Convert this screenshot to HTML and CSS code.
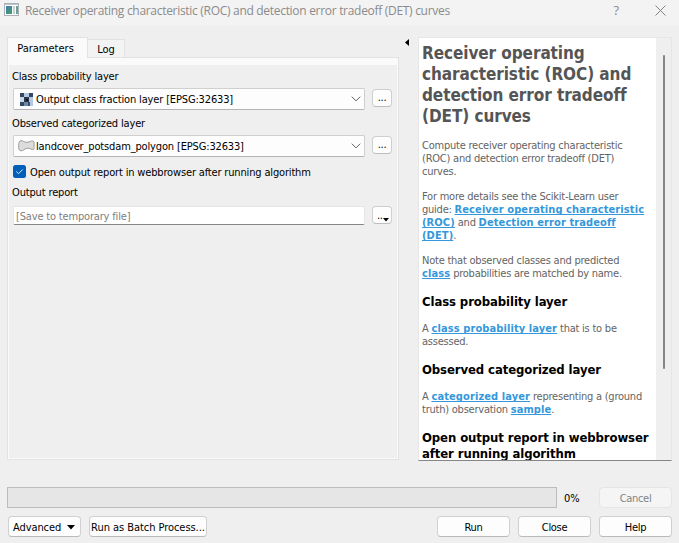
FILE: index.html
```html
<!DOCTYPE html>
<html lang="en">
<head>
<meta charset="utf-8">
<title>Receiver operating characteristic (ROC) and detection error tradeoff (DET) curves</title>
<link rel="stylesheet" href="styles.css">
</head>
<body>
<div class="dialog">
  <header class="titlebar">
    <svg class="app-icon" width="15" height="13" viewBox="0 0 15 13">
      <defs><linearGradient id="g" x1="0" y1="0" x2="1" y2="1"><stop offset="0" stop-color="#4779b5"/><stop offset="1" stop-color="#3fa55d"/></linearGradient></defs>
      <rect x=".5" y=".5" width="14" height="12" fill="#fff" stroke="#a9b2b7"/>
      <path d="M1 1.5h13" stroke="#bcc5c9"/>
      <rect x="2" y="3" width="6" height="8" fill="url(#g)"/>
      <rect x="9" y="3" width="2" height="8" fill="#c3d3cf"/>
      <rect x="12" y="3" width="2" height="8" fill="#6f9f92"/>
    </svg>
    <span class="caption">Receiver operating characteristic (ROC) and detection error tradeoff (DET) curves</span>
    <span class="context-help">?</span>
    <svg class="close" width="11" height="11" viewBox="0 0 11 11"><path d="M.5 .5l10 10M10.500 .5l-10 10" stroke="#828282" fill="none"/></svg>
  </header>

  <main class="content">
    <section class="params">
      <nav class="tabs">
        <span class="tab active">Parameters</span>
        <span class="tab">Log</span>
      </nav>
      <div class="pane">
        <div class="form">
          <label class="label">Class probability layer</label>
          <div class="row">
            <div class="combo">
              <svg class="layer-icon" width="13" height="13" viewBox="0 0 13 13">
                <rect width="13" height="13" fill="#b1c9e5"/>
                <path d="M0 0h4v4H0zM9 0h4v4H9zM0 9h4v4H0z" fill="#37475f"/>
                <path d="M4 4h5v5H4z" fill="#2a3648"/>
                <path d="M0 4h4v5H0z" fill="#c6d8ee"/>
                <path d="M4 9h4v4H4z" fill="#6d87a8"/>
                <path d="M8 9h2v4H8z" fill="#3d4f69"/>
                <rect x="6" y="6" width="2" height="2" fill="#0d141f"/>
              </svg>
              <span class="value one">Output class fraction layer [EPSG:32633]</span>
              <svg class="chevron" width="10" height="6" viewBox="0 0 10 6"><path d="M.8 .7L5 4.900L9.200 .7" fill="none" stroke="#606060"/></svg>
            </div>
            <button class="more">...</button>
          </div>
          <label class="label second">Observed categorized layer</label>
          <div class="row">
            <div class="combo polygon">
              <svg class="layer-icon" width="17" height="13" viewBox="0 0 17 13"><path d="M3 .6C5 .4 6 2.600 9 2.300C12 2 13 .6 15 1C16.300 1.300 16.200 3 16 5C15.800 7 16.600 9 15.500 9.500C14 10 12 8 9.500 8.200C6.500 8.500 5 11.200 3 10.800C.5 10.300 .5 8 .7 5.500C.8 3 1 .8 3 .6Z" fill="#dcdcdc" stroke="#9c9c9c"/></svg>
              <span class="value two">landcover_potsdam_polygon [EPSG:32633]</span>
              <svg class="chevron" width="10" height="6" viewBox="0 0 10 6"><path d="M.8 .7L5 4.900L9.200 .7" fill="none" stroke="#606060"/></svg>
            </div>
            <button class="more">...</button>
          </div>
          <div class="check-row">
            <svg width="13" height="13" viewBox="0 0 13 13"><rect width="13" height="13" rx="2.500" fill="#005fb8"/><path d="M3.300 6.500l2.200 2.200L9.800 4.400" fill="none" stroke="#d5e8fa"/></svg>
            <span class="check-text">Open output report in webbrowser after running algorithm</span>
          </div>
          <label class="label third">Output report</label>
          <div class="row output">
            <div class="field">[Save to temporary file]</div>
            <button class="more menu">..<svg width="6" height="4" viewBox="0 0 6 4"><path d="M0 0h6L3 3.500z"/></svg></button>
          </div>
        </div>
      </div>
    </section>

    <div class="splitter"><svg width="4" height="7" viewBox="0 0 4 7"><path d="M4 0v7L0 3.500z"/></svg></div>

    <aside class="help">
      <article class="help-text">
        <h1>Receiver operating<br>characteristic (ROC) and<br>detection error tradeoff<br>(DET) curves</h1>
        <p>Compute receiver operating characteristic<br>(ROC) and detection error tradeoff (DET)<br>curves.</p>
        <p>For more details see the Scikit-Learn user<br>guide: <a>Receiver operating characteristic</a><br><a>(ROC)</a> and <a>Detection error tradeoff</a><br><a>(DET)</a>.</p>
        <p>Note that observed classes and predicted<br><a>class</a> probabilities are matched by name.</p>
        <h2>Class probability layer</h2>
        <p>A <a>class probability layer</a> that is to be<br>assessed.</p>
        <h2>Observed categorized layer</h2>
        <p>A <a>categorized layer</a> representing a (ground<br>truth) observation <a>sample</a>.</p>
        <h2>Open output report in webbrowser<br>after running algorithm</h2>
      </article>
      <div class="scrollbar"><div class="thumb"></div></div>
    </aside>
  </main>

  <div class="progress-row">
    <div class="progress"></div>
    <span class="percent">0%</span>
    <button class="btn disabled">Cancel</button>
  </div>
  <footer class="buttons">
    <button class="btn advanced">Advanced <svg width="8" height="5" viewBox="0 0 8 5"><path d="M0 0h8L4 4.500z"/></svg></button>
    <button class="btn batch">Run as Batch Process...</button>
    <span class="spacer"></span>
    <button class="btn">Run</button>
    <button class="btn">Close</button>
    <button class="btn">Help</button>
  </footer>
</div>
</body>
</html>
```
FILE: styles.css
```css
* { box-sizing: border-box; }
body { margin: 0; background: #efefef; font: 11px/13px "DejaVu Sans Condensed", "DejaVu Sans", sans-serif; font-stretch: condensed; letter-spacing: -0.15px; color: #000; }
svg { display: block; flex: none; }
.dialog { width: 679px; height: 543px; display: flex; flex-direction: column; overflow: hidden; }

.titlebar { height: 26px; flex: none; display: flex; align-items: center; background: #f3f3f3; padding: 0 13px 6px 4px; color: #8b8b8b; }
.app-icon { position: relative; top: -1px; }
.caption { margin-left: 6px; font: 12px/16px "Open Sans", sans-serif; letter-spacing: -0.3px; white-space: nowrap; padding-top: 1px; }
.context-help { margin-left: auto; margin-right: 36px; font: 13px/16px "Open Sans", sans-serif; }

.content { display: flex; height: 435px; flex: none; padding: 11px 7px 0 7px; }
.params { width: 392px; display: flex; flex-direction: column; }
.tabs { display: flex; align-items: flex-end; height: 20px; z-index: 1; }
.tab { height: 18px; width: 37px; border: 1px solid #e2e2e2; border-left: 0; border-bottom: 0; background: #f3f3f3; text-align: center; line-height: 19px; letter-spacing: 0; }
.tab.active { height: 21px; width: 81px; margin-bottom: -1px; padding-right: 4px; border-left: 1px solid #e2e2e2; background: #fafafa; line-height: 21px; }
.pane { height: 403px; border: 1px solid #e2e2e2; background: #fafafa; padding: 7px 1px 1px; }
.form { height: 100%; background: #efefef; padding: 5px 5px 0 4px; }
.label { display: block; height: 13px; margin-left: -1px; white-space: nowrap; }
.row { display: flex; margin-top: 5px; align-items: flex-start; gap: 7px; }
.combo { width: 352px; flex: none; height: 22px; background: #fdfdfd; border: 1px solid #cfcfcf; border-bottom-color: #b4b4b4; border-radius: 2px; display: flex; align-items: center; padding: 0 3px 0 6px; }
.combo.polygon { padding-left: 4px; }
.value { margin-left: 3px; white-space: nowrap; line-height: 20px; padding-top: 2px; }
.value.two { margin-left: 1px; }
.chevron { margin-left: auto; }
.more { width: 20px; flex: none; height: 18px; margin-top: 1px; padding: 0; border: 1px solid #cfcfcf; border-bottom-color: #bdbdbd; border-radius: 4px; background: #fdfdfd; font: inherit; letter-spacing: -0.3px; line-height: 16px; text-align: center; color: #000; }
.label.second { margin-top: 7px; }
.check-row { display: flex; align-items: center; gap: 4px; margin-top: 8px; height: 13px; white-space: nowrap; }
.check-text { padding-top: 1px; letter-spacing: -0.16px; }
.label.third { margin-top: 8px; }
.output { margin-top: 7px; }
.field { width: 352px; flex: none; height: 19px; background: #fff; border: 1px solid #e6e6e6; border-bottom-color: #868686; border-radius: 2px; padding-left: 2px; line-height: 19px; color: #808080; letter-spacing: -0.17px; }
.menu { display: flex; align-items: center; padding: 2px 0 0 4px; margin-top: 0; }
.menu svg { margin-top: 7px; }

.splitter { width: 19px; padding: 2px 0 0 6px; }
.help { width: 254px; height: 424px; display: flex; border: 1px solid #e6e6e6; border-bottom-color: #868686; }
.help-text { width: 237px; height: 422px; overflow: hidden; background: #fff; padding: 5px 0 0 3px; color: #646464; white-space: nowrap; letter-spacing: -0.23px; }
.help h1 { margin: 0 0 12px; font-size: 17px; line-height: 21px; color: #555; letter-spacing: -0.08px; }
.help p { margin: 0 0 12px; }
.help h2 { margin: 14px 0 12px; font-size: 13px; line-height: 16px; color: #000; letter-spacing: -0.1px; }
.help a { color: #3498db; font-weight: bold; letter-spacing: 0.1px; text-decoration: underline; text-decoration-skip-ink: none; }
.scrollbar { flex: 1; padding: 17px 0 0 7px; }
.thumb { width: 2px; height: 314px; background: #868686; border-radius: 1px; }

.progress-row { display: flex; align-items: center; margin-top: 26px; padding: 0 7px; height: 21px; flex: none; }
.progress { width: 550px; height: 21px; background: #e6e6e6; border: 1px solid #bcbcbc; }
.percent { margin-left: 7px; padding-top: 1px; }
.btn { width: 73px; height: 21px; padding: 1px 0 0; border: 1px solid #d0d0d0; border-bottom-color: #bababa; border-radius: 4px; background: #fdfdfd; font: inherit; letter-spacing: -0.3px; color: #000; white-space: nowrap; }
.disabled { margin-left: auto; background: #f5f5f5; border-color: #e5e5e5; color: #838383; }
.buttons { display: flex; margin-top: 8px; padding: 0 7px 0 8px; gap: 8px; flex: none; }
.advanced { display: flex; align-items: center; gap: 6px; padding-left: 4px; letter-spacing: -0.1px; }
.batch { width: 118px; letter-spacing: -0.05px; }
.spacer { flex: 1; }
```
